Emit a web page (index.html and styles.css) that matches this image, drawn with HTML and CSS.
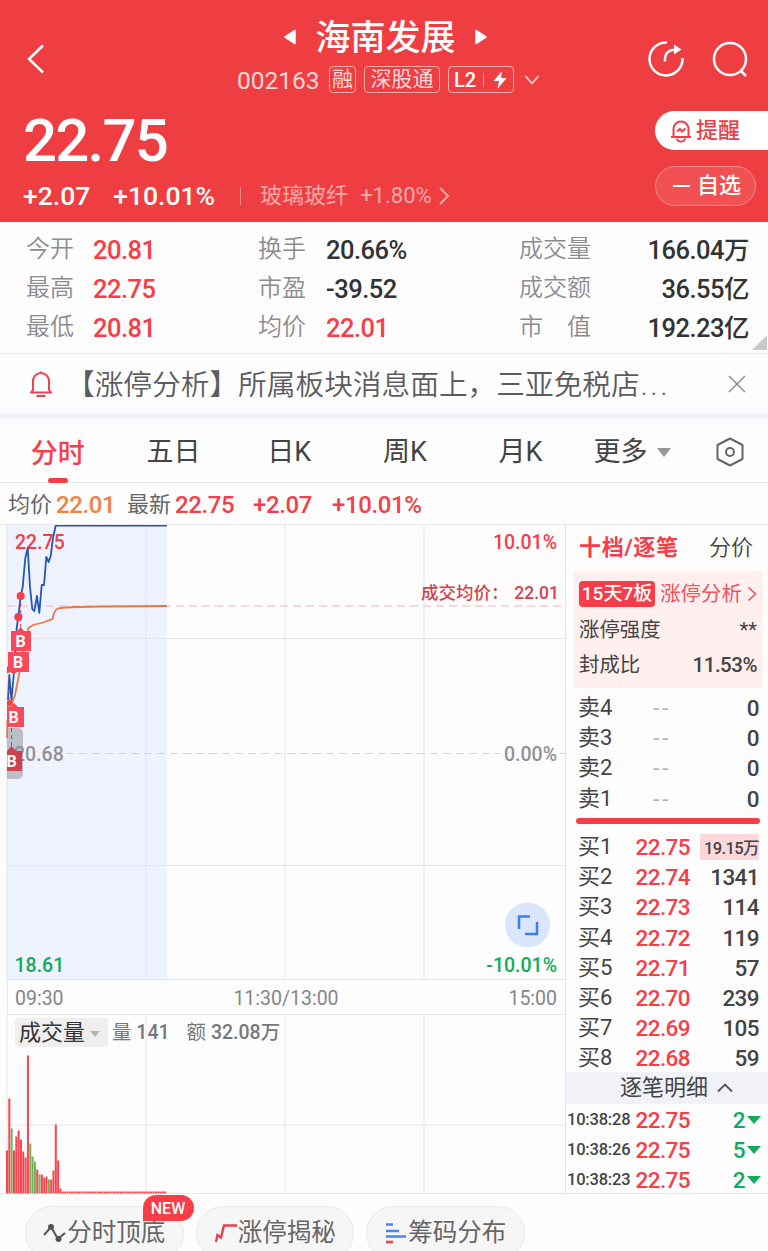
FILE: index.html
```
<!DOCTYPE html>
<html lang="zh-CN">
<head>
    <meta charset="UTF-8">
    <meta name="viewport" content="width=device-width, initial-scale=1.0">
    <title>海南发展 002163</title>
    <link rel="stylesheet" href="styles.css">
</head>
<body>
    <div class="header">
        <div class="nav">
            <svg class="back" width="20" height="32" viewBox="0 0 20 32"><path d="M17 2.500L3 16L17 29.500"/></svg>
            <div class="title">
                <div class="name">
                    <svg width="12" height="16" viewBox="0 0 12 16"><path d="M11 1.500V14.500L1 8Z"/></svg>
                    <h1>海南发展</h1>
                    <svg width="12" height="16" viewBox="0 0 12 16"><path d="M1 1.500V14.500L11 8Z"/></svg>
                </div>
                <div class="code">
                    <span class="num">002163</span>
                    <span class="tag">融</span>
                    <span class="tag tag-wide">深股通</span>
                    <span class="tag tag-l2">L2<i></i><svg width="16" height="18" viewBox="0 0 16 18"><path d="M10 0L1.500 10H7L5.500 18L14.500 7H9Z"/></svg></span>
                    <svg class="down" width="16" height="12" viewBox="0 0 16 12"><path d="M1.500 2L8 9.500L14.500 2"/></svg>
                </div>
            </div>
            <div class="tools">
                <svg width="40" height="40" viewBox="0 0 40 40"><path d="M21 3.500A16.500 16.500 0 1 0 36.500 19"/><path d="M19 22.500C18.500 14 22 10.500 32 10.500"/><path class="fill" d="M28 5.500L35.500 10.500L28 15.500Z"/></svg>
                <svg width="40" height="40" viewBox="0 0 40 40"><circle cx="20" cy="20" r="16"/><path d="M30.500 31.500L36 37"/></svg>
            </div>
        </div>
        <div class="quote">
            <div>
                <div class="price">22.75</div>
                <div class="change">
                    <b>+2.07</b>
                    <b class="percent">+10.01%</b>
                    <span class="sector">玻璃玻纤<em>+1.80%</em></span>
                    <svg width="12" height="20" viewBox="0 0 12 20"><path d="M2 2L10 10L2 18"/></svg>
                </div>
            </div>
            <div class="actions">
                <div class="btn btn-alert">
                    <svg width="22" height="24" viewBox="0 0 22 24"><path d="M3.500 18V10a7.500 7.500 0 0 1 15 0V18M1 18H21M7 19.500a4 3 0 0 0 8 0M7 12.500L10 10L12 12.500L15.500 9.500"/></svg><span>提醒</span>
                </div>
                <div class="btn btn-fav"><i></i><span>自选</span></div>
            </div>
        </div>
    </div>

    <div class="stats">
        <span>今开</span><b class="up">20.81</b><span>换手</span><b>20.66%</b><span>成交量</span><b class="right">166.04万</b>
        <span>最高</span><b class="up">22.75</b><span>市盈</span><b>-39.52</b><span>成交额</span><b class="right">36.55亿</b>
        <span>最低</span><b class="up">20.81</b><span>均价</span><b class="up">22.01</b><span>市　值</span><b class="right">192.23亿</b>
        <svg class="corner" width="15" height="15" viewBox="0 0 15 15"><path d="M15 0V15H0Z"/></svg>
    </div>

    <div class="notice">
        <svg width="24" height="28" viewBox="0 0 24 28"><path d="M4 20V11a8 8 0 0 1 16 0V20L22 22.500H2ZM7.500 26H16.500M12 1.500V3"/></svg>
        <p>【涨停分析】所属板块消息面上，三亚免税店<span>...</span></p>
        <svg class="close" width="18" height="18" viewBox="0 0 18 18"><path d="M1 1L17 17M17 1L1 17"/></svg>
    </div>

    <div class="tabs">
        <span class="active">分时</span>
        <span>五日</span>
        <span>日K</span>
        <span>周K</span>
        <span>月K</span>
        <span class="more">更多<i></i></span>
        <svg width="28" height="30" viewBox="0 0 28 30"><path d="M14 1.500L26.500 8V22L14 28.500L1.500 22V8Z"/><circle cx="14" cy="15" r="4"/></svg>
    </div>

    <div class="summary">
        <span>均价</span><b class="avg">22.01</b>
        <span>最新</span><b>22.75</b><b>+2.07</b><b>+10.01%</b>
    </div>

    <div class="main">
        <div class="charts">
            <svg class="chart" width="566" height="454" viewBox="0 0 566 454">
                <rect x="7" y="0" width="160" height="454" fill="#eef3ff"/>
                <path class="grid" d="M7 0V454M146 0V454M285 0V454M424 0V454M7 113.500H565M7 340.500H565"/>
                <path class="dash-red" d="M7 81H562"/>
                <path class="dash" d="M66 228.500H500M560 228.500H565"/>
                <text class="up" x="15" y="24">22.75</text>
                <text class="mid" x="14" y="235.500">20.68</text>
                <text class="down" x="14.500" y="446.500">18.61</text>
                <text class="up" x="557" y="24" text-anchor="end">10.01%</text>
                <text class="mid" x="557" y="235.500" text-anchor="end">0.00%</text>
                <text class="down" x="557" y="446.500" text-anchor="end">-10.01%</text>
                <text class="deal" x="421" y="73.500">成交均价：</text>
                <text class="deal" x="559" y="73.500" text-anchor="end">22.01</text>
                <path class="line-avg" d="M7 213L7.500 196L12 178L15 170L20 145L25 118L28.500 103L33 100L43 97.500L52.500 94Q54 85 58 83.500Q64 82 100 81.500L167 81"/>
                <path class="line-price" d="M8 175L9.300 150L11.500 175L13.700 150L16.700 103L18.300 92L20.700 71L22.700 62L25.300 33L27.700 23L30 62L32.300 84L34.300 86L37 71L39.300 88L41.700 60H44L46.300 32L48.700 37L50.700 31L53 13L55.700 0.500H167"/>
                <path d="M7 203H18a5 5 0 0 1 5 5V249a5 5 0 0 1-5 5H7Z" fill="#8c8c92" opacity=".5"/>
                <path class="links" d="M20.700 71V106M9 144V182M11.500 203V226"/>
                <g class="dots"><circle cx="20.700" cy="71" r="4"/><circle cx="18.300" cy="92" r="4"/><path d="M7 141.500a4 4 0 0 1 4 4l-4 3ZM10 146h7.500a4 4 0 0 1-7.500 0ZM7 176l4-1l2 4l-6 3Z"/></g>
                <g class="marks">
                    <path d="M11 106H17L20.700 102L24 106H31V126H11Z"/>
                    <path d="M8 127H29V147H8Z"/>
                    <path d="M7 182H10L14 178L18 182H24V202H7Z"/>
                    <path class="dim" d="M7 226L11.500 221L16 226H22V246H7Z"/>
                    <text x="20.700" y="121.500">B</text><text x="18" y="142.500">B</text><text x="13.500" y="198">B</text><text x="11.500" y="241.500">B</text>
                </g>
                <circle cx="527.500" cy="400" r="22.500" fill="#dae6fc"/>
                <path class="expand" d="M519 404V391.500H530M525 409H537V397"/>
            </svg>
            <div class="axis"><span>09:30</span><span>11:30/13:00</span><span>15:00</span></div>
            <div class="volume">
                <svg width="566" height="179" viewBox="0 0 566 179">
                    <path class="grid" d="M7 0V178M146 0V178M285 0V178M424 0V178M7 110H565"/>
                    <g id="bars"></g>
                </svg>
                <div class="volume-head"><span class="select">成交量<i></i></span><span>量 <b>141</b></span><span>额 <b>32.08万</b></span></div>
            </div>
        </div>

        <div class="side">
            <div class="side-tabs"><b>十档/逐笔</b><span>分价</span></div>
            <div class="limit">
                <div><strong>15天7板</strong><em>涨停分析</em><svg width="10" height="16" viewBox="0 0 10 16"><path d="M1.500 1.500L8.500 8L1.500 14.500"/></svg></div>
                <div><span>涨停强度</span><span class="stars">**</span></div>
                <div><span>封成比</span><b>11.53%</b></div>
            </div>
            <div class="book sell" id="sell"></div>
            <div class="book" id="buy"></div>
            <div class="detail"><span>逐笔明细</span><svg width="16" height="10" viewBox="0 0 16 10"><path d="M1 8.500L8 1.500L15 8.500"/></svg></div>
            <div class="book" id="ticks"></div>
        </div>
    </div>

    <div class="footer">
        <div class="pill">
            <svg width="24" height="20" viewBox="0 0 24 20" stroke="#555" fill="none" stroke-width="2"><path d="M1 12L8 4L15 16L22 10"/><circle cx="8" cy="4" r="2" fill="#555"/><circle cx="15.500" cy="16" r="2" fill="#555"/></svg><span>分时顶底</span>
            <b class="new">NEW</b>
        </div>
        <div class="pill">
            <svg width="24" height="20" viewBox="0 0 24 20" stroke="#ee3f4c" fill="none" stroke-width="2.400"><path d="M2 19L3.500 12L7 14.500L10 2.500H23"/></svg><span>涨停揭秘</span>
        </div>
        <div class="pill">
            <svg width="24" height="22" viewBox="0 0 24 22" stroke="#4a86ee" fill="none" stroke-width="2.600"><path d="M2 2.500H9M2 9H15M2 14.500H22"/><path d="M2 20H9" stroke="#ee3f4c"/></svg><span>筹码分布</span>
        </div>
    </div>

    <script>
        // 成交量柱: [高度, 是否下跌]
        const volumes = [[43], [95], [65, 1], [43], [57], [63], [54], [42], [36], [138], [50, 1], [37, 1], [32, 1],
            [24], [19, 1], [19], [16], [17], [14, 1], [14], [23], [69], [33], [5]];
        while (volumes.length < 69) volumes.push([2]);

        document.getElementById('bars').innerHTML = volumes.map(([h, down], i) =>
            `<rect x="${(6 + i * 2.325).toFixed(2)}" y="${178.500 - h}" width="2" height="${h}" fill="${down ? '#72b15a' : '#fa4450'}"/>`
        ).join('');

        // 买卖盘口
        const sell = ['卖4', '卖3', '卖2', '卖1'];
        document.getElementById('sell').innerHTML = sell.map(name =>
            `<div class="row"><span>${name}</span><em>--</em><b>0</b></div>`
        ).join('');

        const buy = [['22.75', '19.15万'], ['22.74', '1341'], ['22.73', '114'], ['22.72', '119'],
            ['22.71', '57'], ['22.70', '239'], ['22.69', '105'], ['22.68', '59']];
        document.getElementById('buy').innerHTML = buy.map(([price, qty], i) =>
            `<div class="row"><span>买${i + 1}</span><b class="up">${price}</b><b${i ? '' : ' class="large"'}>${qty}</b></div>`
        ).join('');

        const ticks = [['10:38:28', 2], ['10:38:26', 5], ['10:38:23', 2]];
        document.getElementById('ticks').innerHTML = ticks.map(([time, qty]) =>
            `<div class="row tick"><span>${time}</span><b class="up">22.75</b><b class="down">${qty}<i></i></b></div>`
        ).join('');
    </script>
</body>
</html>
```
FILE: styles.css
```
* { box-sizing: border-box; }
body { margin: 0; width: 768px; height: 1251px; overflow: hidden; background: #fdfdfe; color: #333; font-family: Roboto, "Noto Sans CJK SC", sans-serif; }
b { font-weight: 500; }
i, em { font-style: normal; }
svg { display: block; fill: none; flex: none; }
.up { color: #f83c48; }
.down { color: #0fac5c; }

/* header */
.header { height: 222px; background: #ef3e41; color: #fff; }
.nav { display: grid; grid-template-columns: 200px 1fr 200px; height: 110px; }
.back { margin: 43px 0 0 26px; stroke: #fff; stroke-width: 2.5; }
.title { display: flex; flex-direction: column; align-items: center; padding-top: 14px; }
.name { display: flex; align-items: center; gap: 19px; height: 46px; margin-left: 3px; }
.name svg { fill: #fff; stroke: #fff; stroke-width: 1.5; stroke-linejoin: round; }
.name h1 { margin: 0; padding-top: 3px; font-size: 35px; font-weight: 500; line-height: 46px; }
.code { display: flex; align-items: center; height: 39px; margin-left: 9px; gap: 8px; color: #ffd9d9; }
.num { width: 84px; margin-top: 3px; font-size: 24.500px; line-height: 38px; }
.tag { display: flex; align-items: center; justify-content: center; width: 27px; height: 27px; border: 1px solid #f9aaaa; border-radius: 4px; font-size: 21px; line-height: 22px; padding-bottom: 1px; }
.tag-wide { width: 76px; }
.tag-l2 { width: 66px; padding-bottom: 0; color: #fff; font-size: 20px; font-weight: 500; }
.tag-l2 i { width: 1px; height: 14px; margin: 0 8px 0 7px; background: #f9aaaa; }
.tag-l2 svg { fill: #fff; }
.code .down { margin-left: 2px; stroke: #ffd0d0; stroke-width: 1.8; }
.tools { display: flex; justify-content: flex-end; gap: 24px; padding: 39px 18px 0 0; }
.tools svg { stroke: #fff; stroke-width: 2.5; }
.tools .fill { fill: #fff; stroke: none; }
.quote { display: flex; justify-content: space-between; }
.price { height: 64px; padding-left: 23px; font-size: 60px; line-height: 62px; font-weight: 500; letter-spacing: -1.800px; }
.change { display: flex; align-items: center; height: 43px; padding-left: 23px; font-size: 26.500px; }
.percent { margin-left: 23px; }
.sector { margin-left: 25px; padding-left: 19px; font-size: 22px; line-height: 18px; border-left: 1px solid #f78b8d; color: #f9a8a9; }
.sector em { margin: 0 6px 0 12px; }
.change svg { stroke: #f9a8a9; stroke-width: 2; }
.actions { display: flex; flex-direction: column; width: 113px; padding-top: 1px; }
.btn { display: flex; align-items: center; height: 39px; font-size: 22px; font-weight: 500; line-height: 32px; border-radius: 20px; }
.btn-alert { gap: 4px; padding-left: 15px; background: #fff; color: #ee3f48; border-radius: 20px 0 0 20px; }
.btn-alert svg { stroke: #ee3f48; stroke-width: 2; }
.btn-fav { width: 101px; height: 40px; margin-top: 16px; padding-left: 17px; border: 1px solid #f78b8d; background: #f15153; }
.btn-fav i { width: 17px; height: 2px; margin-right: 7px; background: #fff; }

/* stats */
.stats { position: relative; display: grid; grid-template-columns: 67px 165px 68px 193px 100px 130px; grid-auto-rows: 39px; height: 132px; padding: 8px 19px 0 26px; border-bottom: 1px solid #e9e9ee; font-size: 25.500px; line-height: 40px; }
.stats span { font-size: 24px; color: #8c8c8f; font-weight: 350; line-height: 38px; white-space: nowrap; }
.stats b { letter-spacing: -0.500px; }
.stats .right { text-align: right; }
.corner { position: absolute; right: 1px; bottom: 3px; fill: #c9c9cb; }

/* notice */
.notice { display: flex; align-items: center; height: 59px; padding: 0 22px 0 29px; }
.notice svg { stroke: #f2404c; stroke-width: 2; stroke-linejoin: round; }
.notice p { flex: 1; margin: 2px 0 0 13px; font-size: 28.700px; line-height: 56px; font-weight: 350; color: #5c5c60; white-space: nowrap; }
.notice p span { margin-left: 1px; letter-spacing: 3px; }
.notice .close { stroke: #909090; stroke-width: 1.6; }

/* tabs */
.tabs { display: grid; grid-template-columns: repeat(5, 115.700px) 138px 28px; align-items: center; height: 70px; border-top: 6px solid #f1f2f8; border-bottom: 1px solid #e9e9ec; font-size: 27px; line-height: 66px; text-align: center; color: #444; }
.tabs .active { color: #f63d49; font-weight: 500; }
.tabs .active::after { content: ""; display: block; width: 20px; height: 5px; margin: -9px auto 0; border-radius: 3px; background: #f63d49; }
.tabs .more { display: flex; align-items: center; padding-left: 15px; }
.more i { margin-left: 10px; border: 7px solid transparent; border-top: 9px solid #999; border-bottom: 0; }
.tabs svg { stroke: #666; stroke-width: 2; stroke-linejoin: round; }

.summary { display: flex; align-items: center; height: 41px; padding: 3px 0 0 8px; font-size: 24px; line-height: 38px; color: #f63d49; }
.summary span { font-size: 22px; color: #666; margin-right: 4px; }
.summary b { width: 60px; margin-right: 18px; letter-spacing: -0.400px; white-space: nowrap; }
.summary b + b + b { margin-left: 1px; }
.summary .avg { margin-right: 11px; color: #f18242; }

/* charts */
.main { display: grid; grid-template-columns: 566px 202px; height: 670px; border-top: 1px solid #e7e7ea; border-bottom: 1px solid #e7e7ea; }
.charts { border-right: 1px solid #e5e5e8; }
.grid { stroke: #e4e5e9; stroke-width: 1; }
.dash { stroke: #ccd6e2; stroke-dasharray: 8 5; }
.dash-red { stroke: #f8ccd1; stroke-dasharray: 8 5; stroke-width: 1.5; }
.chart text { font-size: 19.500px; font-weight: 500; }
.chart .up { fill: #f83c48; }
.chart .down { fill: #0fac5c; }
.chart .mid { fill: #909096; }
.chart .deal { fill: #d8404c; font-size: 17.500px; }
.line-avg { stroke: #f3773c; stroke-width: 1.8; }
.line-price { stroke: #2257b8; stroke-width: 1.8; stroke-linejoin: round; }
.links { stroke: #d33650; stroke-dasharray: 4 3; }
.dots { fill: #f83c48; }
.marks path { fill: #f94a5b; }
.marks .dim { fill: #cb4250; }
.chart .marks text { fill: #fff; font-size: 16px; font-weight: 700; text-anchor: middle; }
.expand { stroke: #3c7df0; stroke-width: 2.5; }
.axis { display: grid; grid-template-columns: 1fr 1fr 1fr; height: 36px; margin-left: 7px; padding: 0 8px 0 7px; border: 1px solid #e4e5e9; border-right: 0; font-size: 19.500px; line-height: 37px; color: #85858a; }
.axis span:nth-child(2) { text-align: center; }
.axis span:last-child { text-align: right; }
.volume { position: relative; }
.volume-head { position: absolute; left: 15px; top: 3px; display: flex; align-items: center; font-size: 19.500px; line-height: 29px; color: #77777b; }
.volume-head span { margin-right: 17px; white-space: nowrap; }
.volume-head .select { display: flex; align-items: center; width: 93px; height: 29px; margin-right: 4px; padding-left: 4px; border-radius: 4px; background: #efeff0; color: #333; font-size: 22px; line-height: 28px; }
.select i { margin: 2px 0 0 5px; border: 5px solid transparent; border-top: 6px solid #b5b5b5; border-bottom: 0; }

/* order book */
.side { font-size: 22px; color: #444; }
.side-tabs { display: flex; justify-content: space-between; height: 46px; padding: 0 15px 0 13px; line-height: 46px; font-weight: 350; }
.side-tabs b { color: #f83c48; font-weight: 700; letter-spacing: 0.700px; }
.limit { height: 117px; margin: 0 5px 0 7px; padding: 5px 6px; border-radius: 4px; background: #ffefef; font-size: 20.400px; line-height: 32px; }
.limit div { display: flex; align-items: center; justify-content: space-between; height: 35.700px; }
.limit strong { width: 76px; height: 26px; border-radius: 4px; background: #f83c48; color: #fff; font-size: 19px; line-height: 26px; font-weight: 500; text-align: center; white-space: nowrap; }
.limit em { color: #f05460; }
.limit svg { stroke: #f05460; stroke-width: 1.7; }
.limit b { font-size: 20.500px; letter-spacing: -0.500px; }
.book { padding: 0 9px 0 12px; }
.sell { height: 136px; margin-bottom: 8px; padding-top: 5px; }
.sell::after { content: ""; display: block; height: 6px; margin: 4.500px -1px 0 -2px; border-radius: 3px; background: #f83c48; }
.row { display: grid; grid-template-columns: 48px 64px 1fr; height: 30.200px; line-height: 30px; align-items: center; font-size: 22.500px; }
.row span { font-size: 22px; white-space: nowrap; }
.row b { text-align: right; letter-spacing: -0.600px; }
.row em { padding-left: 27px; color: #aeb2bd; letter-spacing: 3px; }
.row .large { justify-self: end; width: 59px; height: 26px; background: #fdd8da; font-size: 16.500px; line-height: 29px; white-space: nowrap; }
.detail { display: flex; align-items: center; justify-content: center; gap: 9px; height: 32px; margin-top: -2px; padding-left: 19px; background: #f1f2f8; line-height: 28px; }
.detail svg { stroke: #555; stroke-width: 1.8; }
#ticks { padding: 1px 7px 0 1px; }
.tick { grid-template-columns: 59px 64px 1fr; }
.tick span { font-size: 16.500px; font-weight: 500; letter-spacing: -0.200px; }
.tick .down { display: flex; align-items: center; justify-content: flex-end; }
.tick i { margin-left: 2px; border: 7px solid transparent; border-top: 8px solid #0fac5c; border-bottom: 0; }

/* footer */
.footer { display: flex; gap: 12px; padding: 12px 0 0 25px; }
.pill { position: relative; display: flex; align-items: center; justify-content: center; width: 158.500px; height: 54px; border: 1px solid #e8e8ea; border-radius: 27px; background: #f6f6f7; font-size: 24.500px; line-height: 34px; color: #666; }
.new { position: absolute; right: -11px; top: -12px; width: 51px; height: 26px; border-radius: 13px 13px 13px 0; background: #f83c48; color: #fff; font-size: 16px; line-height: 27px; text-align: center; }
```
